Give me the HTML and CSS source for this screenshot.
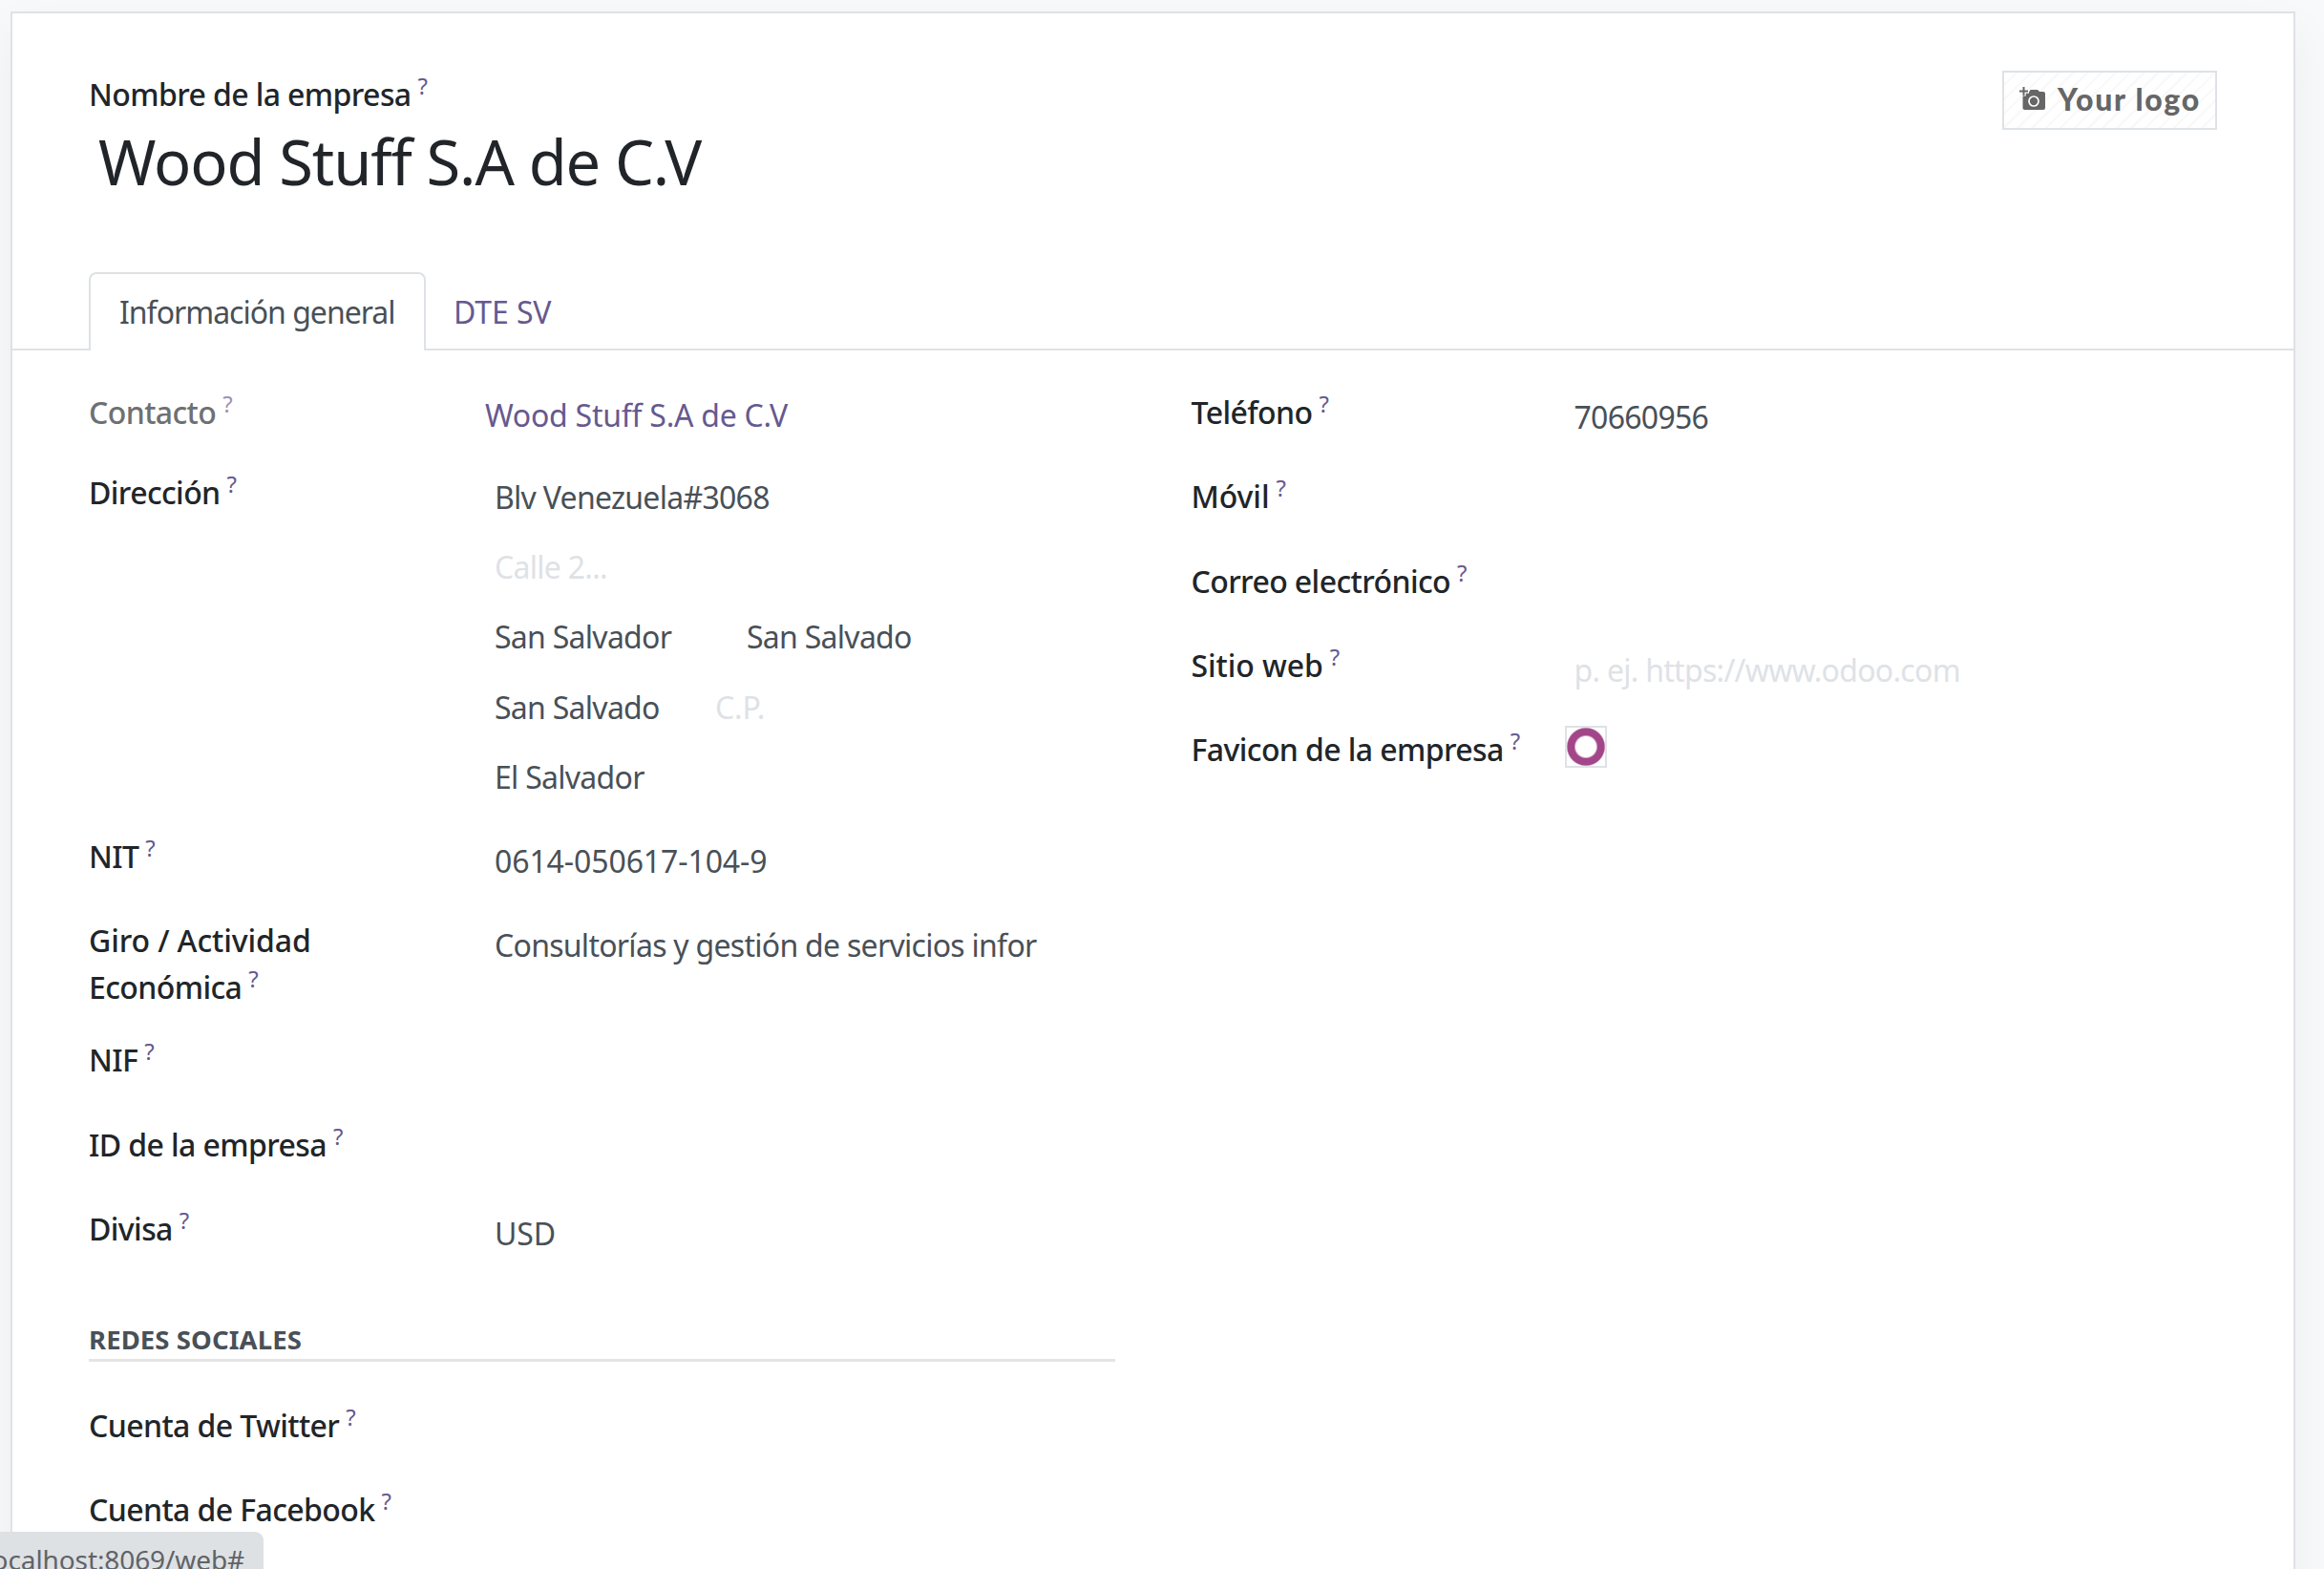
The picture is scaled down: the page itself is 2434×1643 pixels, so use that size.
FILE: index.html
```html
<!DOCTYPE html>
<html lang="es">
<head>
<meta charset="utf-8">
<title>Wood Stuff S.A de C.V</title>
<link rel="stylesheet" href="styles.css">
</head>
<body>
<main class="sheet">
  <header class="header">
    <div class="heading">
      <div class="label">Nombre de la empresa<sup>?</sup></div>
      <h1 class="title">Wood Stuff S.A de C.V</h1>
    </div>
    <div class="logo">
      <svg class="logo-icon" viewBox="0 0 28 26" width="28" height="26">
        <path fill="#666" d="M10 5.500 11.500 3h7.500l2 2h4a2 2 0 0 1 2 2v15a2 2 0 0 1-2 2H5.500a2 2 0 0 1-2-2V5.500z"/>
        <circle cx="15" cy="15" r="5" fill="#666" stroke="#fff" stroke-width="1.700"/>
        <path d="M4.500-.5v10M-.5 4.500h10.500" stroke="#fff" stroke-width="4.500"/>
        <path d="M4.500 0v9M0 4.500h9" stroke="#666" stroke-width="2"/>
      </svg>
      <span class="logo-text">Your logo</span>
    </div>
  </header>
  <nav class="tabs">
    <a class="tab active">Información general</a>
    <a class="tab loose">DTE SV</a>
  </nav>
  <div class="groups">
    <section class="group">
      <div class="row contact">
        <div class="label muted">Contacto<sup>?</sup></div>
        <div class="value link">Wood Stuff S.A de C.V</div>
      </div>
      <div class="row address">
        <div class="label">Dirección<sup>?</sup></div>
        <div class="value lines">
          <div>Blv Venezuela#3068</div>
          <div class="ph">Calle 2...</div>
          <div class="pair"><span class="city">San Salvador</span><span>San Salvado</span></div>
          <div class="pair"><span class="state">San Salvado</span><span class="ph loose">C.P.</span></div>
          <div>El Salvador</div>
        </div>
      </div>
      <div class="row">
        <div class="label">NIT<sup>?</sup></div>
        <div class="value loose">0614-050617-104-9</div>
      </div>
      <div class="row tall">
        <div class="label"><span class="loose">Giro / Actividad</span><br>Económica<sup>?</sup></div>
        <div class="value">Consultorías y gestión de servicios infor</div>
      </div>
      <div class="row"><div class="label">NIF<sup>?</sup></div></div>
      <div class="row"><div class="label">ID de la empresa<sup>?</sup></div></div>
      <div class="row">
        <div class="label">Divisa<sup>?</sup></div>
        <div class="value loose">USD</div>
      </div>
      <h2 class="section">REDES SOCIALES</h2>
      <div class="row"><div class="label">Cuenta de Twitter<sup>?</sup></div></div>
      <div class="row"><div class="label">Cuenta de Facebook<sup>?</sup></div></div>
    </section>
    <section class="group right">
      <div class="row">
        <div class="label">Teléfono<sup>?</sup></div>
        <div class="value">70660956</div>
      </div>
      <div class="row"><div class="label"><span class="loose">Móvil</span><sup>?</sup></div></div>
      <div class="row"><div class="label">Correo electrónico<sup>?</sup></div></div>
      <div class="row">
        <div class="label"><span class="loose">Sitio web</span><sup>?</sup></div>
        <div class="value ph">p. ej. https://www.odoo.com</div>
      </div>
      <div class="row"><div class="label">Favicon de la empresa<sup>?</sup></div><div class="favicon"></div></div>
    </section>
  </div>
</main>
<div class="status">localhost:8069/web#</div>
</body>
</html>
```
FILE: styles.css
```css
* { box-sizing: border-box; }
body {
  margin: 0;
  height: 1643px;
  overflow: hidden;
  background: #f8f9fb;
  color: #495057;
  font: 400 32px/49px "Noto Sans", "Open Sans", sans-serif;
}
.sheet {
  width: 2393px;
  height: 1700px;
  margin: 12px 0 0 11px;
  background: #fff;
  border: 2px solid #dee2e6;
  box-shadow: 0 20px 50px rgba(0, 0, 0, .05);
}
.header {
  display: flex;
  justify-content: space-between;
  height: 271px;
  padding: 60px 80px 0;
}
.label {
  color: #212529;
  font-weight: 500;
  letter-spacing: -.6px;
}
.muted { opacity: .65; }
.loose, .value.loose { letter-spacing: -.1px; }
sup {
  margin-left: 7px;
  color: #66598f;
  font-size: 24px;
  font-weight: 400;
  line-height: 0;
  vertical-align: 12px;
}
.title {
  margin: 2px 0 0 10px;
  color: #212529;
  font-size: 65px;
  font-weight: 400;
  letter-spacing: -1.100px;
  line-height: 88px;
}
.logo {
  display: flex;
  width: 225px;
  height: 62px;
  padding: 15px 16px;
  border: 2px solid #dee2e6;
  background: repeating-linear-gradient(135deg, #fff 0 8px, #f9f9f9 8px 10.500px);
}
.logo-icon { flex: none; }
.logo-text {
  margin-left: 12px;
  color: #666;
  font: 900 32px/26px Lato, sans-serif;
  letter-spacing: 1.700px;
  white-space: nowrap;
}
.tabs {
  display: flex;
  height: 82px;
  padding: 0 80px;
  border-bottom: 2px solid #dee2e6;
}
.tab {
  height: 82px;
  padding: 15px 27px;
  border: 2px solid transparent;
  border-bottom: 0;
  color: #66598f;
  white-space: nowrap;
}
.tab.active {
  width: 353px;
  padding: 15px 30px;
  background: #fff;
  border-color: #dee2e6;
  border-radius: 8px 8px 0 0;
  color: #495057;
  letter-spacing: -1px;
}
.groups { display: flex; gap: 80px; padding: 40px 80px 0; }
.group { width: 1075px; }
.row { display: grid; grid-template-columns: 415px 1fr; height: 88.3px; }
.right .row { grid-template-columns: 391px 1fr; }
.value { padding: 5px 0 0 10px; letter-spacing: -.72px; }
.contact { height: 84px; }
.contact .value { padding: 3px 0 0; }
.value.link { color: #66598f; letter-spacing: -.25px; }
.address { height: 381px; }
.lines { display: flex; flex-direction: column; gap: 24.200px; }
.pair { display: flex; }
.city { width: 264px; }
.state { width: 231px; }
.ph { color: #dee2e6; }
.tall { height: 125px; }
.section {
  height: 45px;
  margin: 31px 0 42px;
  border-bottom: 3px solid #e5e5e5;
  font-size: 27.500px;
  letter-spacing: .1px;
  line-height: 43px;
}
.favicon {
  width: 44px;
  height: 44px;
  border: 2px solid #dee2e6;
  background: radial-gradient(circle, #fff 10.500px, #a24689 12.500px 19px, #fff 20.500px);
}
.status {
  position: fixed;
  left: 0;
  bottom: 0;
  display: flex;
  justify-content: flex-end;
  width: 276px;
  height: 39px;
  padding: 5px 20px 0 0;
  overflow: hidden;
  border-radius: 0 9px 0 0;
  background: #dee1e4;
  color: #606367;
  font-size: 28px;
  letter-spacing: -.1px;
}
```
